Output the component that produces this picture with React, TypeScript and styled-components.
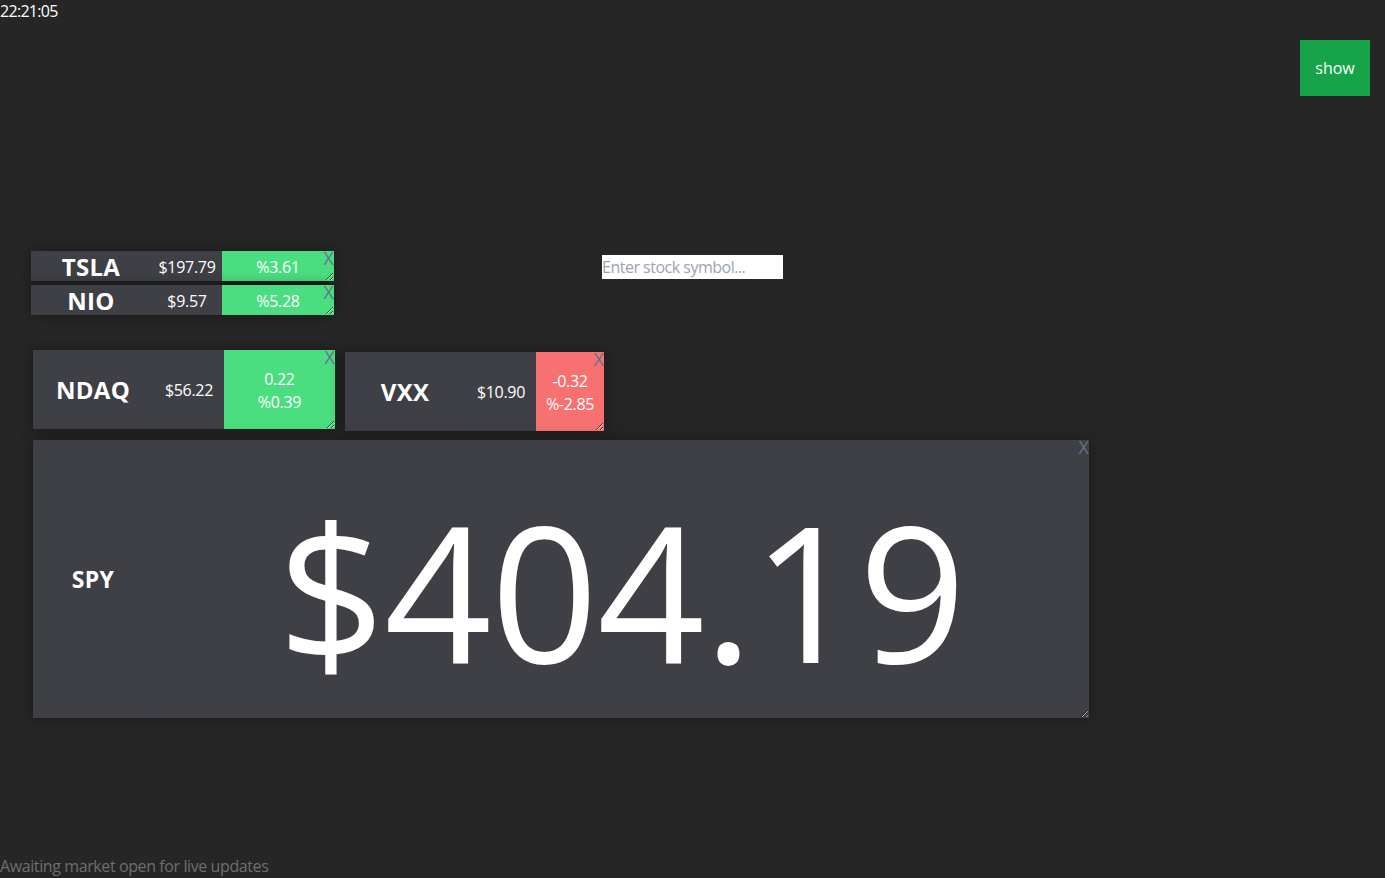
import React from "react";
import styled, { createGlobalStyle } from "styled-components";

const GlobalStyle = createGlobalStyle`
  * { box-sizing: border-box; }
  html, body { margin: 0; padding: 0; background: #262626; }
  body { font-family: "Open Sans", "Noto Sans", sans-serif; color: #ffffff; }
  input, button { font-family: inherit; }
`;

const Page = styled.div`
  min-height: 100vh;
  display: flex;
  flex-direction: column;
  background: #262626;
`;

const Clock = styled.div`
  font-size: 16px;
  line-height: 22px;
  height: 22px;
  letter-spacing: -0.7px;
`;

const TopBar = styled.div`
  display: flex;
  justify-content: flex-end;
  padding-right: 15px;
  margin-top: 18px;
`;

const ShowButton = styled.button`
  background: #16a34a;
  color: #ffffff;
  border: none;
  padding: 16px 0;
  font-size: 16px;
  line-height: 24px;
  width: 70px;
  height: 56px;
  cursor: pointer;
`;

const Board = styled.div`
  margin-top: 155px;
  display: flex;
  flex-direction: column;
`;

const Row = styled.div<{ $left: number; $top: number }>`
  display: flex;
  align-items: flex-start;
  padding-left: ${(p) => p.$left}px;
  margin-top: ${(p) => p.$top}px;
`;

const List = styled.div`
  display: flex;
  flex-direction: column;
  gap: 4px;
`;

const SymbolInput = styled.input`
  width: 181px;
  height: 24px;
  margin-left: 268px;
  margin-top: 4px;
  border: none;
  outline: none;
  padding: 0;
  background: #ffffff;
  color: #111827;
  font-size: 16px;
  line-height: 24px;
  letter-spacing: -0.5px;
  &::placeholder { color: #9ca3af; }
`;

const Widget = styled.div<{ $dx?: number; $dy?: number }>`
  position: relative;
  display: flex;
  flex-shrink: 0;
  margin-left: ${(p) => p.$dx ?? 0}px;
  margin-top: ${(p) => p.$dy ?? 0}px;
`;

const Card = styled.div<{ $w: number; $h: number }>`
  display: flex;
  width: ${(p) => p.$w}px;
  height: ${(p) => p.$h}px;
  background: #3f3f46;
  box-shadow: 0 0 14px rgba(0, 0, 0, 0.35);
  resize: both;
  overflow: hidden;
  flex-shrink: 0;
`;

const TickerCell = styled.div<{ $size: number }>`
  width: 120px;
  flex-shrink: 0;
  display: flex;
  align-items: center;
  justify-content: center;
  font-weight: 700;
  font-size: ${(p) => p.$size}px;
  letter-spacing: 0.3px;
`;

const PriceCell = styled.div<{ $grow?: boolean; $size: number; $pad?: number }>`
  ${(p) => (p.$grow ? "flex: 1;" : "width: 71px; flex-shrink: 0;")}
  display: flex;
  align-items: center;
  justify-content: center;
  border-left: 1px solid #3a4252;
  font-size: ${(p) => p.$size}px;
  line-height: ${(p) => (p.$size > 40 ? 1 : 1.4)};
  padding-top: ${(p) => p.$pad ?? 0}px;
  letter-spacing: ${(p) => (p.$size > 40 ? "-1px" : "-0.3px")};
  white-space: nowrap;
`;

const ChangeCell = styled.div<{ $up: boolean }>`
  flex: 1;
  display: flex;
  flex-direction: column;
  align-items: center;
  justify-content: center;
  padding-top: 3px;
  background: ${(p) => (p.$up ? "#4ade80" : "#f87171")};
  font-size: 16px;
  line-height: 23px;
  letter-spacing: -0.3px;
  white-space: nowrap;
`;

const CloseX = styled.span`
  position: absolute;
  top: -2px;
  right: 0;
  font-size: 18px;
  line-height: 18px;
  color: #64748b;
  cursor: pointer;
`;

const Footer = styled.div`
  margin-top: auto;
  font-size: 16px;
  line-height: 24px;
  letter-spacing: -0.4px;
  color: #6e6e6e;
`;

type Quote = {
  symbol: string;
  price: string;
  pct: string;
  up: boolean;
};

const listQuotes: Quote[] = [
  { symbol: "TSLA", price: "$197.79", pct: "%3.61", up: true },
  { symbol: "NIO", price: "$9.57", pct: "%5.28", up: true },
];

export default function App() {
  return (
    <>
      <GlobalStyle />
      <Page>
        <Clock>22:21:05</Clock>
        <TopBar>
          <ShowButton>show</ShowButton>
        </TopBar>
        <Board>
          <Row $left={31} $top={0}>
            <List>
              {listQuotes.map((q) => (
                <Widget key={q.symbol}>
                  <Card $w={303} $h={30}>
                    <TickerCell $size={24}>{q.symbol}</TickerCell>
                    <PriceCell $size={16} $pad={2}>{q.price}</PriceCell>
                    <ChangeCell $up={q.up}>{q.pct}</ChangeCell>
                  </Card>
                  <CloseX>X</CloseX>
                </Widget>
              ))}
            </List>
            <SymbolInput placeholder="Enter stock symbol..." />
          </Row>
          <Row $left={33} $top={35}>
            <Widget>
              <Card $w={302} $h={79}>
                <TickerCell $size={24}>NDAQ</TickerCell>
                <PriceCell $size={16} $pad={2}>$56.22</PriceCell>
                <ChangeCell $up>
                  <span>0.22</span>
                  <span>%0.39</span>
                </ChangeCell>
              </Card>
              <CloseX>X</CloseX>
            </Widget>
            <Widget $dx={10} $dy={2}>
              <Card $w={259} $h={79}>
                <TickerCell $size={24}>VXX</TickerCell>
                <PriceCell $size={16} $pad={2}>$10.90</PriceCell>
                <ChangeCell $up={false}>
                  <span>-0.32</span>
                  <span>%-2.85</span>
                </ChangeCell>
              </Card>
              <CloseX>X</CloseX>
            </Widget>
          </Row>
          <Row $left={33} $top={9}>
            <Widget>
              <Card $w={1056} $h={278}>
                <TickerCell $size={23}>SPY</TickerCell>
                <PriceCell $grow $size={188} $pad={22}>
                  $404.19
                </PriceCell>
              </Card>
              <CloseX>X</CloseX>
            </Widget>
          </Row>
        </Board>
        <Footer>Awaiting market open for live updates</Footer>
      </Page>
    </>
  );
}
